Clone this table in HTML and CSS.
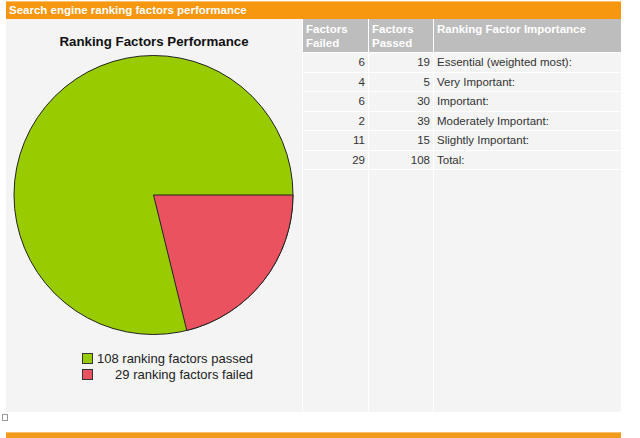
FILE: index.html
```html
<!DOCTYPE html>
<html>
<head>
<meta charset="utf-8">
<link rel="stylesheet" href="styles.css">
</head>
<body>
<div class="wrap">
  <div class="titlebar">Search engine ranking factors performance</div>
  <div class="content">
    <div class="chart-panel">
      <div class="chart-title">Ranking Factors Performance</div>
      <svg class="pie" width="296" height="282" viewBox="0 0 296 282">
        <circle cx="147.5" cy="141" r="139.5" fill="#99cc00" stroke="#222" stroke-width="1"/>
        <path d="M147.5 141 L287 141 A139.5 139.5 0 0 1 180.8 276.5 Z" fill="#e9525e" stroke="#222" stroke-width="1"/>
      </svg>
      <div class="legend">
        <span class="swatch pass"></span><span class="ltext">108 ranking factors passed</span>
        <span class="swatch fail"></span><span class="ltext">29 ranking factors failed</span>
      </div>
    </div>
    <div class="table">
      <div class="th">Factors Failed</div>
      <div class="th">Factors Passed</div>
      <div class="th">Ranking Factor Importance</div>

      <div class="td num">6</div><div class="td num">19</div><div class="td txt">Essential (weighted most):</div>
      <div class="td num">4</div><div class="td num">5</div><div class="td txt">Very Important:</div>
      <div class="td num">6</div><div class="td num">30</div><div class="td txt">Important:</div>
      <div class="td num">2</div><div class="td num">39</div><div class="td txt">Moderately Important:</div>
      <div class="td num">11</div><div class="td num">15</div><div class="td txt">Slightly Important:</div>
      <div class="td num">29</div><div class="td num">108</div><div class="td txt">Total:</div>

      <div class="td"></div><div class="td"></div><div class="td"></div>
    </div>
  </div>
  <div class="marker"></div>
  <div class="bottombar"></div>
</div>
</body>
</html>
```
FILE: styles.css
```css
html, body {
  margin: 0;
  padding: 0;
  background: #ffffff;
  font-family: "Liberation Sans", Arial, sans-serif;
}
.wrap {
  width: 615px;
  padding: 1px 0 0 6px;
  position: relative;
  height: 437px;
}
.titlebar {
  background: #f7960f;
  border-top: 1px solid #fcc36a;
  line-height: 17px;
  color: #ffffff;
  font-weight: bold;
  font-size: 11.5px;
  padding-left: 3px;
  box-sizing: border-box;
  height: 18px;
}
.content {
  display: flex;
  gap: 1px;
  height: 393px;
  background: #ffffff;
}
.chart-panel {
  width: 296px;
  background: #f4f4f4;
  display: flex;
  flex-direction: column;
}
.chart-title {
  padding-top: 15px;
  line-height: 16px;
  font-size: 13.3px;
  font-weight: bold;
  color: #111;
  text-align: center;
}
.pie {
  display: block;
  margin-top: 4px;
}
.legend {
  margin-top: 17px;
  margin-left: 76px;
  display: grid;
  grid-template-columns: 11px auto;
  column-gap: 4px;
  row-gap: 5px;
  align-items: center;
  justify-content: start;
  font-size: 13px;
  color: #222;
  line-height: 11px;
}
.swatch {
  width: 11px;
  height: 11px;
  box-sizing: border-box;
  border: 1px solid #333;
}
.swatch.pass { background: #99cc00; }
.swatch.fail { background: #e9525e; }
.ltext { text-align: right; }
.table {
  width: 318px;
  display: grid;
  grid-template-columns: 65px 64px 187px;
  grid-template-rows: 33px repeat(6, 18.5px) 1fr;
  column-gap: 1px;
  row-gap: 1px;
  background: #ffffff;
}
.th {
  background: #bdbdbd;
  color: #ffffff;
  font-weight: bold;
  font-size: 11.5px;
  line-height: 14px;
  padding: 3px 3px 0 3px;
}
.td {
  background: #f4f4f4;
  font-size: 11.5px;
  color: #333;
  line-height: 18px;
}
.num { text-align: right; padding-right: 3px; }
.txt { padding-left: 3px; }
.marker {
  width: 4px;
  height: 5px;
  border: 1px solid #999;
  margin: 2px 0 0 -4px;
}
.bottombar {
  position: absolute;
  left: 6px;
  top: 432px;
  width: 615px;
  height: 6px;
  background: #f29b1b;
  border-top: 1px solid #f8c070;
  box-sizing: border-box;
}
```
